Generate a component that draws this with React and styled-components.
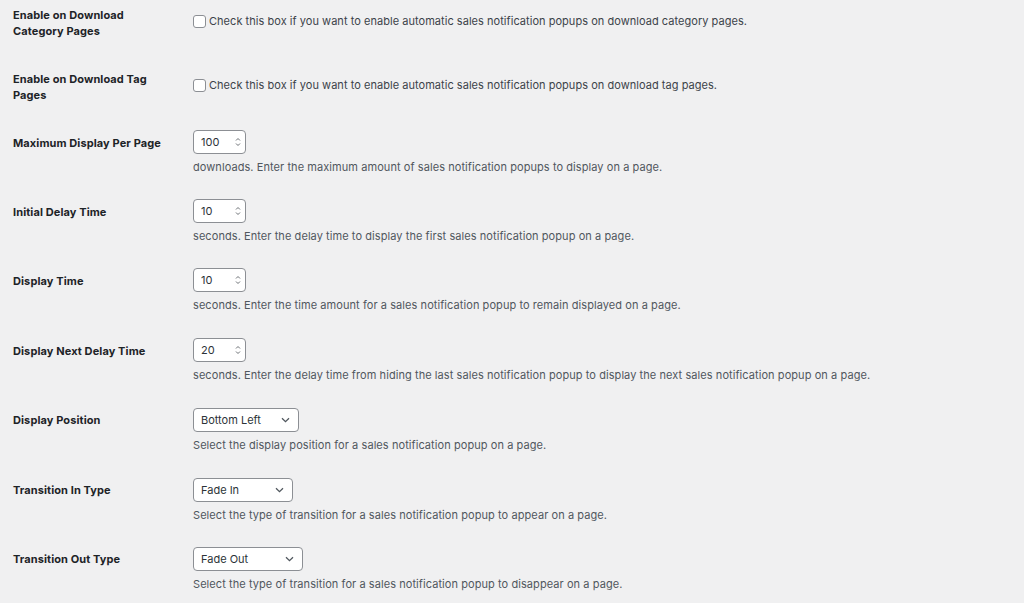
import React from "react";
import styled, { createGlobalStyle } from "styled-components";

const GlobalStyle = createGlobalStyle`
	html, body {
		margin: 0;
		padding: 0;
		background: #f0f0f1;
	}
	body {
		font-family: Inter, "Noto Sans", sans-serif;
		color: #3c434a;
		-webkit-font-smoothing: antialiased;
	}
`;

const FormTable = styled.div`
	display: flex;
	flex-direction: column;
	padding-left: 13px;
	width: 1011px;
	height: 603px;
	overflow: hidden;
`;

const Row = styled.div`
	display: grid;
	grid-template-columns: 180px 1fr;
	height: ${(p) => p.$h}px;
	flex-shrink: 0;
`;

const Label = styled.div`
	padding-top: 7px;
	font-size: 11px;
	line-height: 16px;
	font-weight: 700;
	letter-spacing: 0.1px;
	color: #1d2327;
	width: 150px;
`;

const Field = styled.div`
	display: flex;
	flex-direction: column;
	align-items: flex-start;
	padding-top: ${(p) => p.$top}px;
`;

const CheckLine = styled.label`
	display: flex;
	align-items: center;
	gap: 3px;
	font-size: 11px;
	line-height: 16px;
	letter-spacing: 0.04px;
	color: #3c434a;
`;

const Box = styled.span`
	width: 13px;
	height: 13px;
	box-sizing: border-box;
	border: 1px solid #8c8f94;
	border-radius: 3px;
	background: #fff;
`;

const NumberBox = styled.div`
	display: flex;
	align-items: center;
	justify-content: space-between;
	box-sizing: border-box;
	width: 53px;
	height: 24px;
	padding: 0 4px 0 7px;
	border: 1px solid #8c8f94;
	border-radius: 4px;
	background: #fff;
	font-size: 11px;
	color: #2c3338;
`;

const SelectBox = styled.div`
	display: flex;
	align-items: center;
	justify-content: space-between;
	box-sizing: border-box;
	width: ${(p) => p.$w}px;
	height: 24px;
	padding: 0 8px 0 7px;
	border: 1px solid #8c8f94;
	border-radius: 4px;
	background: #fff;
	font-size: 11px;
	color: #2c3338;
`;

const Description = styled.p`
	margin: 5px 0 0;
	font-size: 11px;
	line-height: 16px;
	letter-spacing: 0.07px;
	color: #50575e;
	white-space: nowrap;
`;

function Spinner() {
	return (
		<svg width="6" height="10" viewBox="0 0 6 10" fill="none" stroke="#6b6f74" strokeWidth="1">
			<path d="M1 3.5 L3 1.5 L5 3.5" />
			<path d="M1 6.5 L3 8.5 L5 6.5" />
		</svg>
	);
}

function Chevron() {
	return (
		<svg width="9" height="6" viewBox="0 0 9 6" fill="none" stroke="#50575e" strokeWidth="1.3">
			<path d="M1 1.2 L4.5 4.6 L8 1.2" />
		</svg>
	);
}

const checkRows = [
	{ label: "Enable on Download Category Pages", text: "Check this box if you want to enable automatic sales notification popups on download category pages." },
	{ label: "Enable on Download Tag Pages", text: "Check this box if you want to enable automatic sales notification popups on download tag pages." }
];

const numberRows = [
	{ label: "Maximum Display Per Page", value: "100", text: "downloads. Enter the maximum amount of sales notification popups to display on a page.", h: 69 },
	{ label: "Initial Delay Time", value: "10", text: "seconds. Enter the delay time to display the first sales notification popup on a page.", h: 69 },
	{ label: "Display Time", value: "10", text: "seconds. Enter the time amount for a sales notification popup to remain displayed on a page.", h: 70 },
	{ label: "Display Next Delay Time", value: "20", text: "seconds. Enter the delay time from hiding the last sales notification popup to display the next sales notification popup on a page.", h: 69 }
];

const selectRows = [
	{ label: "Display Position", value: "Bottom Left", w: 106, text: "Select the display position for a sales notification popup on a page.", h: 70 },
	{ label: "Transition In Type", value: "Fade In", w: 100, text: "Select the type of transition for a sales notification popup to appear on a page.", h: 69 },
	{ label: "Transition Out Type", value: "Fade Out", w: 110, text: "Select the type of transition for a sales notification popup to disappear on a page.", h: 70 }
];

export default function App() {
	return (
		<>
			<GlobalStyle />
			<FormTable>
				{checkRows.map((r) => (
					<Row key={r.label} $h={64}>
						<Label>{r.label}</Label>
						<Field $top={13}>
							<CheckLine>
								<Box />
								{r.text}
							</CheckLine>
						</Field>
					</Row>
				))}
				{numberRows.map((r) => (
					<Row key={r.label} $h={r.h}>
						<Label>{r.label}</Label>
						<Field $top={2}>
							<NumberBox>
								{r.value}
								<Spinner />
							</NumberBox>
							<Description>{r.text}</Description>
						</Field>
					</Row>
				))}
				{selectRows.map((r) => (
					<Row key={r.label} $h={r.h}>
						<Label>{r.label}</Label>
						<Field $top={3}>
							<SelectBox $w={r.w}>
								{r.value}
								<Chevron />
							</SelectBox>
							<Description>{r.text}</Description>
						</Field>
					</Row>
				))}
			</FormTable>
		</>
	);
}
